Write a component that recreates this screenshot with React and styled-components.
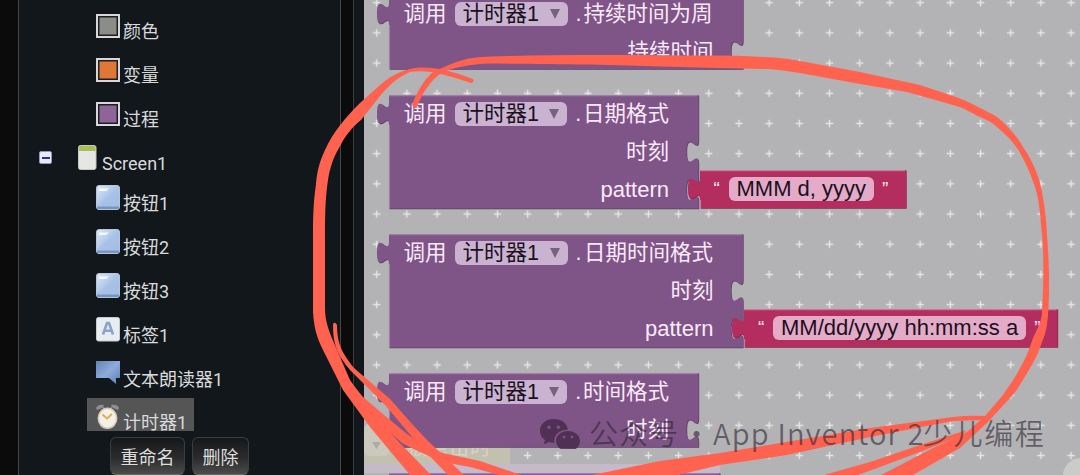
import React from "react";
import styled, { createGlobalStyle } from "styled-components";

const GlobalStyle = createGlobalStyle`
  * { box-sizing: border-box; }
  body { margin: 0; background: #0b0b0c; overflow: hidden; }
`;

const Page = styled.main`
  position: relative;
  display: flex;
  width: 1080px;
  height: 475px;
  overflow: hidden;
  background: #0b0b0c;
`;

const Sidebar = styled.aside`
  display: flex;
  flex-direction: column;
  width: 323px;
  margin-left: 18px;
  margin-right: 12px;
  flex: none;
  background: #12171b;
  border: solid #45484a;
  border-width: 0 1px;
  font-family: Roboto, "Noto Sans CJK SC", sans-serif;
  font-size: 18px;
  color: #d9dadb;
`;

const Tree = styled.ul`
  display: flex;
  flex-direction: column;
  height: 431px;
  margin: 0;
  padding: 10px 0 0;
  list-style: none;
  overflow: hidden;
`;

const TreeRow = styled.li`
  display: flex;
  flex: none;
  align-items: flex-start;
  height: ${(p) => p.$height || 44}px;
  padding-left: ${(p) => p.$indent || 68}px;
`;

const Item = styled.div`
  display: flex;
  align-items: flex-start;
  gap: ${(p) => p.$gap || 3}px;
  height: 40px;
  margin-top: ${(p) => (p.$selected ? -4 : 0)}px;
  padding: ${(p) => (p.$selected ? 7 : 4)}px 7px 0 9px;
  background: ${(p) => (p.$selected ? "#555555" : "transparent")};
  svg { flex: none; margin-top: -1px; }
`;

const ItemLabel = styled.span`
  line-height: 20px;
  margin-top: 8px;
  white-space: nowrap;
`;

const Swatch = styled.span`
  width: 24px;
  height: 24px;
  border: 2px solid #d8d8da;
  background: ${(p) => p.$color};
  box-shadow: inset 0 0 0 1.5px #1d2023;
`;

const Toggle = styled.span`
  display: flex;
  align-items: center;
  justify-content: center;
  width: 13px;
  height: 13px;
  margin: 9px 17px 0 0;
  border: 1px solid #8d93d6;
  border-radius: 2px;
  background: #e9ebfb;
  &::after { content: ""; width: 8px; height: 2px; background: #2a2f9b; }
`;

const Actions = styled.div`
  display: flex;
  gap: 7px;
  padding: 6px 0 0 91px;
`;

const ActionButton = styled.button`
  width: ${(p) => p.$width}px;
  height: 38px;
  padding: 0 0 1px;
  border: 1px solid #3b3e40;
  border-bottom-color: #66686a;
  border-radius: 6px;
  background: linear-gradient(#15181a, #2a2b2c 55%, #4c4b4a);
  color: #dedede;
  font: inherit;
`;

const Gutter = styled.div`
  width: 11px;
  flex: none;
  background: #12171b;
  border-left: 1px solid #3b3e41;
`;

const Workspace = styled.section`
  position: relative;
  flex: 1;
  overflow: hidden;
  background: #b3b3b5;
`;

const Backdrop = styled.svg`
  position: absolute;
  inset: 0;
`;

const BlockNode = styled.div`
  position: absolute;
  left: ${(p) => p.$x}px;
  top: ${(p) => p.$y}px;
  width: ${(p) => p.$w}px;
  font-family: "Liberation Sans", "Noto Sans CJK SC", sans-serif;
  font-size: 21.5px;
  color: #fbeafb;
`;

const Outline = styled.svg`
  position: absolute;
  left: -13px;
  top: 0;
  overflow: visible;
`;

const BlockRow = styled.div`
  position: relative;
  display: flex;
  align-items: center;
  justify-content: ${(p) => (p.$end ? "flex-end" : "flex-start")};
  height: 38px;
  padding: 0 29px 0 15px;
  line-height: 24px;
  white-space: nowrap;
`;

const Field = styled.span`
  display: flex;
  align-items: center;
  height: 24px;
  margin: 0 8px;
  padding: 0 8px;
  border-radius: 6px;
  background: ${(p) => (p.$pink ? "#e3abc8" : "#c9b3d1")};
  color: #1b101c;
  ${(p) => (p.$pink ? "font-size: 22px;" : "width: 113px; justify-content: space-between;")}
`;

const MethodName = styled.span`
  display: flex;
  justify-content: space-between;
  width: ${(p) => p.$w}px;
`;

const PatternLabel = styled.span`
  font-size: 22px;
`;

const StringRow = styled(BlockRow)`
  padding: 0 14px;
`;

const Quote = styled.span`
  width: 7px;
  font-size: 19px;
  line-height: 24px;
`;

const Ink = styled.svg`
  position: absolute;
  left: 0;
  top: 0;
`;

const Watermark = styled.div`
  position: absolute;
  left: 539px;
  top: 411px;
  display: flex;
  align-items: center;
  height: 42px;
  font-family: "Noto Sans CJK SC", sans-serif;
  font-size: 29px;
  font-weight: 350;
  line-height: 42px;
  white-space: pre;
  color: rgba(45, 35, 50, 0.6);
  svg { margin-right: 8px; }
`;

const MarkText = styled.span`
  width: ${(p) => p.$w}px;
  letter-spacing: ${(p) => p.$spacing || 0}px;
  text-align: ${(p) => (p.$center ? "center" : "left")};
`;

const ButtonIcon = () => (
  <svg width="24" height="25" viewBox="0 0 24 25">
    <defs>
      <linearGradient id="glass" x1="0" y1="0" x2="1" y2="1">
        <stop offset="0" stopColor="#dfe9f7" />
        <stop offset=".5" stopColor="#a9c4e8" />
        <stop offset="1" stopColor="#9bb9e3" />
      </linearGradient>
    </defs>
    <rect x=".5" y=".5" width="23" height="24" rx="2.5" fill="url(#glass)" stroke="#b9c5d6" />
    <path d="M1 20 L23 4 V22 H1Z" fill="#a6c0e6" opacity=".6" />
    <path d="M3 3.5h10l-3 2.5H3z" fill="#f6faff" />
    <path d="M1 21.5h22v1.5q0 1-1.500 1h-19q-1.500 0-1.500-1z" fill="#7895c2" />
  </svg>
);

const LabelIcon = () => (
  <svg width="24" height="25" viewBox="0 0 24 25">
    <rect x=".5" y=".5" width="23" height="23.500" rx="2" fill="#e9edf1" stroke="#c6ccd2" />
    <path d="M7 17.500 11 6h2l4 11.500M8.500 13.800h7" fill="none" stroke="#8ba3cb" strokeWidth="2.600" />
  </svg>
);

const SpeechIcon = () => (
  <svg width="24" height="25" viewBox="0 0 24 25">
    <defs>
      <linearGradient id="speech" x1="0" y1="0" x2="1" y2="1">
        <stop offset="0" stopColor="#6283b9" />
        <stop offset=".5" stopColor="#8eabd9" />
        <stop offset="1" stopColor="#5c7fb9" />
      </linearGradient>
    </defs>
    <path d="M0 0h24v17h-4v6l-7-6H0z" fill="url(#speech)" />
  </svg>
);

const ScreenIcon = () => (
  <svg width="19" height="25" viewBox="0 0 19 25">
    <rect x=".5" y=".5" width="17.500" height="24" rx="2" fill="#e6e7e5" stroke="#c4c8bd" />
    <path d="M1 2.500Q1 1 2.500 1h13.500q1.500 0 1.500 1.500V6H1z" fill="#a8bf58" />
  </svg>
);

const ClockIcon = () => (
  <svg width="24" height="25" viewBox="0 0 24 25">
    <path d="M0 4Q2 0 8 1L6 4 1 6zM23 4Q21 0 15 1l2 3 5 2z" fill="#8c9095" />
    <path d="M7 3l3 4M16 3l-3 4" stroke="#97918a" strokeWidth="1.500" />
    <ellipse cx="11.500" cy="14.300" rx="9.200" ry="10" fill="#f4f0e8" stroke="#d4c9b7" strokeWidth="1.600" />
    <path d="M6.500 10.500 11 14.500 16 10" fill="none" stroke="#dcae59" strokeWidth="2" />
  </svg>
);

const WechatMark = () => (
  <svg width="42" height="34" viewBox="0 0 42 34">
    <path
      fill="#422746"
      fillOpacity=".78"
      fillRule="evenodd"
      d="M14.500 4C6.500 4 1 9 1 16c0 3.800 2 7 5 9L4.800 29.500l5-2.500c2 .6 4 .8 5.700.6C14 20 20.500 14.500 28.800 14.700 28 8 22 4 14.500 4zM10 10.500a1.700 1.700 0 1 1 0 3.400 1.700 1.700 0 0 1 0-3.400zM19.300 10.500a1.700 1.700 0 1 1 0 3.400 1.700 1.700 0 0 1 0-3.400z"
    />
    <path
      fill="#422746"
      fillOpacity=".78"
      fillRule="evenodd"
      d="M29 16c-6.800 0-12 4.400-12 10s5.200 10 12 10q2.500 0 4.500-.7l4.500 2-1-3.600c2.500-1.800 4-4.500 4-7.700 0-5.600-5.200-10-12-10zM25 20.700a1.400 1.400 0 1 1 0 2.800 1.400 1.400 0 0 1 0-2.800zM33 20.700a1.400 1.400 0 1 1 0 2.800 1.400 1.400 0 0 1 0-2.800z"
    />
  </svg>
);

const TAB = 7.5;

function outlinePath(w, h, sockets) {
  let d = `M13 0H${13 + w}`;
  sockets.forEach((y) => {
    d += `V${y + TAB}c0 15-12-12-12 11.250s12-3.750 12 11.250`;
  });
  return `${d}V${h}H13V30c0-15-12 12-12-11.250s12 3.750 12-11.250Z`;
}

function BlockShape({ w, h, sockets = [], pink }) {
  const d = outlinePath(w, h, sockets);
  return (
    <Outline width={w + 14} height={h + 1}>
      <path d={d} transform="translate(.7 .7)" fill={pink ? "#8b2549" : "#5c3f63"} />
      <path d={d} fill={pink ? "#b32d5e" : "#7f5487"} />
      <path d={`M13.500 ${h}V30M13 .7H${12 + w}`} fill="none" stroke={pink ? "#d07598" : "#a07da8"} strokeWidth="1.200" />
    </Outline>
  );
}

function CallBlock({ x, y, w, method, methodWidth, args }) {
  const h = 38 * (args.length + 1) - (args.length === 1 ? 2 : 0.5);
  return (
    <BlockNode $x={x} $y={y} $w={w}>
      <BlockShape w={w} h={h} sockets={args.map((_, i) => 38 * (i + 1))} />
      <BlockRow>
        <span>调用</span>
        <Field>
          <span>计时器1</span>
          <svg width="10" height="10" viewBox="0 0 10 10">
            <path d="M0 0h10L5 10z" fill="#77627e" />
          </svg>
        </Field>
        <MethodName $w={methodWidth}>
          <span>.</span>
          <span>{method}</span>
        </MethodName>
      </BlockRow>
      {args.map((a) => (
        <BlockRow key={a} $end>
          {a === "pattern" ? <PatternLabel>{a}</PatternLabel> : a}
        </BlockRow>
      ))}
    </BlockNode>
  );
}

function StringBlock({ x, y, w, text }) {
  return (
    <BlockNode $x={x} $y={y} $w={w}>
      <BlockShape w={w} h={38} pink />
      <StringRow>
        <Quote>“</Quote>
        <Field $pink>{text}</Field>
        <Quote>”</Quote>
      </StringRow>
    </BlockNode>
  );
}

const DRAWERS = [
  ["颜色", "#8b8d88"],
  ["变量", "#df7736"],
  ["过程", "#8e6598"],
];

const COMPONENTS = [
  ["按钮1", ButtonIcon],
  ["按钮2", ButtonIcon],
  ["按钮3", ButtonIcon],
  ["标签1", LabelIcon],
  ["文本朗读器1", SpeechIcon],
  ["计时器1", ClockIcon],
];

const STROKES = [
  "M473 79C460 74 440 67 420 67.500C405 68 390 76 380 85L360 103C346 117 333 132 325 150C319 163 317 172 316 184C313 205 313 220 313 240V312C314 328 317 338 323 350L343 390L370 427L410 475H431L397 440L373 413L350 380L337 350C329 332 325 322 325 308V240C325 218 325 200 328 180C330 168 333 158 339 148C345 136 352 127 361 120L377 100C386 88 396 78 410 72C430 69 452 77 471 83Q475 82 473 79Z",
  "M412 105C418 90 427 72 442 68C456 62 466 57 490 56.500C560 54 640 55 720 55.500C760 56 785 58 800 61L860 72L920 85L953 96C965 100 975 105 980 108C992 114 997 116 1003 122C1013 132 1018 138 1023 147C1032 160 1037 172 1040 183C1044 200 1046 215 1047 235C1049 260 1050 290 1048 315C1047 328 1045 335 1042 342C1037 357 1033 363 1030 368C1020 385 1018 389 1010 398L987 423L960 448L913 475H881L933 448L967 432L985 416L1003 395C1012 382 1016 376 1020 368C1026 358 1029 350 1033 338C1038 328 1042 320 1042 312C1043.500 285 1044 255 1042 235C1040 210 1039 200 1035 187C1030 172 1026 164 1020 153C1014 142 1006 135 997 127C990 121 987 120 980 117C971 113 965 108 953 105L907 92L860 84L800 73C785 71 775 69 763 69L720 68L660 66.500C620 64.500 540 64 490 63.500C470 64 453 68 443 72C430 80 422 94 417 107Q414 109 412 105Z",
  "M985 416Q970 415 953 417L870 428L780 443L720 453L660 461L592 475H678L720 465L787 455L870 437L953 421L985 420Z",
  "M967 430L920 445L870 462L824 475H858L880 467L920 452L960 436Z",
  "M349 380L363 397L383 414L407 434Q425 447 443 453L480 461L521 475H499L470 467L443 462Q418 452 402 443L376 420L358 400Z",
  "M333 324Q335 321 337 325C337 345 343 354 354 368L390 399L412 424L428 441L464 475H448L418 444L386 406L350 370C337 354 333 345 333 324Z",
];

const GhostLabel = styled.span`
  position: absolute;
  left: 43px;
  top: 433px;
  font-family: "Noto Sans CJK SC", sans-serif;
  font-size: 21px;
  line-height: 24px;
  color: #d5d3c8;
`;

export default function App() {
  return (
    <Page>
      <GlobalStyle />
      <Sidebar>
        <Tree>
          {DRAWERS.map(([name, color]) => (
            <TreeRow key={name}>
              <Item>
                <Swatch $color={color} />
                <ItemLabel>{name}</ItemLabel>
              </Item>
            </TreeRow>
          ))}
          <TreeRow $indent={20} $height={40}>
            <Toggle />
            <Item $gap={5}>
              <ScreenIcon />
              <ItemLabel>Screen1</ItemLabel>
            </Item>
          </TreeRow>
          {COMPONENTS.map(([name, Icon]) => (
            <TreeRow key={name}>
              <Item $selected={name === "计时器1"}>
                <Icon />
                <ItemLabel>{name}</ItemLabel>
              </Item>
            </TreeRow>
          ))}
        </Tree>
        <Actions>
          <ActionButton $width={75}>重命名</ActionButton>
          <ActionButton $width={57}>删除</ActionButton>
        </Actions>
      </Sidebar>
      <Gutter />
      <Workspace>
        <Backdrop width="716" height="475">
          <defs>
            <pattern id="grid" width="30.190" height="30.190" x="-2.400" y="-12.400" patternUnits="userSpaceOnUse">
              <path d="M11.400 15.100h7.400M15.100 11.400v7.400" stroke="#e6e6e7" strokeWidth="1.400" />
            </pattern>
          </defs>
          <rect width="716" height="475" fill="url(#grid)" />
          <rect y="432" width="146" height="32" fill="#c2c0ae" />
          <rect y="424" width="25" height="32" rx="5" fill="#cbc9bd" />
          <path d="M8 442h9l-4.500 7z" fill="#aeac9d" />
          <rect y="464" width="356" height="9" fill="#c5bac8" />
          <circle cx="717" cy="476" r="18" fill="#cbcbca" />
        </Backdrop>
        <GhostLabel>被点击时</GhostLabel>
        <CallBlock x={24.5} y={-5} w={354} method="持续时间为周" methodWidth={137} args={["持续时间"]} />
        <CallBlock x={24.5} y={94.5} w={309.500} method="日期格式" methodWidth={94} args={["时刻", "pattern"]} />
        <StringBlock x={335.5} y={170} w={206} text="MMM d, yyyy" />
        <CallBlock x={24.5} y={233.5} w={354} method="日期时间格式" methodWidth={137.500} args={["时刻", "pattern"]} />
        <StringBlock x={380} y={309} w={313.500} text="MM/dd/yyyy hh:mm:ss a" />
        <CallBlock x={24.5} y={372.5} w={309.500} method="时间格式" methodWidth={94} args={["时刻"]} />
        <BlockNode $x={24.5} $y={472.5} $w={331}>
          <BlockShape w={331} h={74} />
        </BlockNode>
      </Workspace>
      <Ink width="1080" height="475">
        {STROKES.map((d) => (
          <path key={d} d={d} fill="#ff6350" />
        ))}
      </Ink>
      <Watermark>
        <WechatMark />
        <MarkText $w={91} $spacing={1.1}>公众号</MarkText>
        <MarkText $w={33} $center>·</MarkText>
        <MarkText $w={210} $spacing={1.2}>App Inventor 2</MarkText>
        <MarkText $w={124} $spacing={1.6}>少儿编程</MarkText>
      </Watermark>
    </Page>
  );
}
